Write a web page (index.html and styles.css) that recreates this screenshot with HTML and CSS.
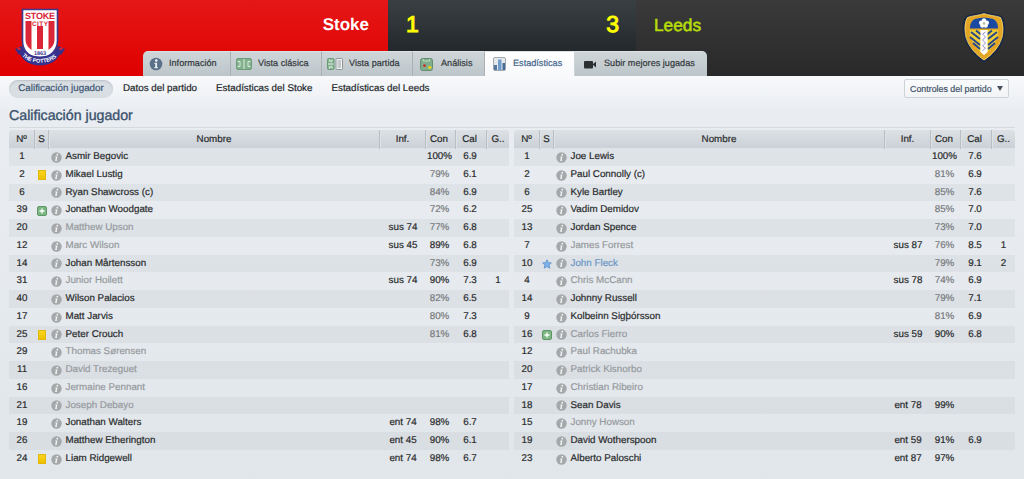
FILE: index.html
```html
<!DOCTYPE html>
<html lang="es">
<head>
  <meta charset="UTF-8" />
  <title>Stoke 1 - 3 Leeds</title>
  <link rel="stylesheet" href="styles.css">
</head>
<body>
  <header class="match-header">
    <div class="team home">
      <svg class="badge-home" width="52" height="60" viewBox="0 0 52 60">
        <path d="M1 41l7-3 3 5-6 4zM51 41l-7-3-3 5 6 4z" fill="#392f88"/>
        <path d="M3.500 40l3 1.500M48.500 40l-3 1.500" stroke="#d92437" stroke-width="2"/>
        <path d="M8.500 1.500h35v31c0 11-7 16-17.500 19C15.500 49 8.500 44 8.500 33z" fill="#fff" stroke="#3b3990" stroke-width="1.600"/>
        <path d="M11.500 13h6v29c-4-3-6-6-6-11zM23 18h6v23h-6zM34.500 13h6v18c0 5-2 8-6 11z" fill="#db2638"/>
        <text x="26" y="11" class="crest-name" textLength="30">STOKE</text>
        <text x="26" y="17.500" class="crest-city" textLength="16">CITY</text>
        <text x="26" y="46.500" class="crest-year">1863</text>
        <path d="M5 43l5-1c5 8.500 27 8.500 32 0l5 1c-3 11-13 14.500-21 14.500S8 54 5 43z" fill="#35318d"/>
        <path id="ribbon" d="M8 47.500c7 9.500 29 9.500 36 0" fill="none"/>
        <text class="crest-ribbon"><textPath href="#ribbon" textLength="38">THE POTTERS</textPath></text>
      </svg>
      <span class="team-name">Stoke</span>
    </div>
    <div class="score"><span>1</span><span>3</span></div>
    <div class="team away">
      <span class="team-name">Leeds</span>
      <svg class="badge-away" width="44" height="52" viewBox="0 0 44 52">
        <path d="M22 1.500c4 2 12 2 17 4 2.500 4 4 12 2 21-3 11-11 19-19 24C14 45 6 37 3 26 1 17 2 9 5 5.500c5-2 13-2 17-4z" fill="#e3a526" stroke="#14264a" stroke-width="1.800"/>
        <path d="M22 2.500c4 2 12 2 16.500 4 2 4 3.500 12 1.500 20-3 10-10 17-18 22.500C14 43.500 7 36.500 4 26.500 2 18 3.500 10 5.500 6.500 10 4.500 18 4.500 22 2.500z" fill="none" stroke="#f7df7d" stroke-width=".7"/>
        <path d="M8 17.500c0-5 2-8.500 5-9.500 6-2 12-2 18 0 3 1 5 4.500 5 9.500z" fill="#1b49a1"/>
        <path d="M8 19h28c1 9-5 18-14 25C13 37 7 28 8 19z" fill="#efcf36"/>
        <path d="M9 21l9 7M8 26l10 8M11 32l7 6M14 19.500l5 4M35 21l-9 7M36 26l-10 8M33 32l-7 6M30 19.500l-5 4" stroke="#28478c" stroke-width="2"/>
        <path d="M18.500 19h7v22l-3.500 3-3.500-3z" fill="#fff"/>
        <path d="M23.500 21l-3 2 3 3-3 3 3 3-3 3 3 2-3 3" fill="none" stroke="#9a8fc6" stroke-width="1"/>
        <g fill="#fff"><circle cx="22" cy="9.500" r="2.200"/><circle cx="24.800" cy="11.700" r="2.200"/><circle cx="23.700" cy="14.600" r="2.200"/><circle cx="20.300" cy="14.600" r="2.200"/><circle cx="19.200" cy="11.700" r="2.200"/></g>
        <circle cx="22" cy="12.500" r="1.200" fill="#b9c0a0"/>
      </svg>
    </div>
    <nav class="tabs">
      <a class="tab t-info">
        <svg width="14" height="14" viewBox="0 0 14 14"><circle cx="7" cy="7" r="6.300" fill="#5a7189"/><circle cx="7.300" cy="3.500" r="1.200" fill="#fff"/><path d="M5.300 5.700h2.800v4.500h.9v1.100H5.200v-1.100h1V6.700h-.9z" fill="#e9eef2"/></svg>
        <span>Información</span>
      </a>
      <a class="tab t-classic">
        <svg width="16" height="12" viewBox="0 0 16 12"><rect x=".5" y=".5" width="15" height="11" rx="1.500" fill="#82b18d" stroke="#6d9a79"/><path d="M8 1v10M1.500 3.500H4v5H1.500M14.500 3.500H12v5h2.500" stroke="#dcebdc" fill="none"/></svg>
        <span>Vista clásica</span>
      </a>
      <a class="tab t-match">
        <svg width="16" height="12" viewBox="0 0 16 12"><rect x=".5" y=".5" width="6.500" height="11" rx="1" fill="#82b18d" stroke="#6d9a79"/><path d="M1 6h5.500M2.500 1.500v1.700h2.500V1.500M2.500 10.500V8.800h2.500v1.700" stroke="#e3f0e3" fill="none"/><rect x="9" y=".5" width="6.500" height="11" rx="1" fill="#f2f4f4" stroke="#8d9496"/><path d="M10.500 3h3.500M10.500 5h3.500M10.500 7h3.500M10.500 9h3.500" stroke="#8b9296" stroke-width=".9"/></svg>
        <span>Vista partida</span>
      </a>
      <a class="tab t-analysis">
        <svg width="13" height="13" viewBox="0 0 13 13"><rect x=".5" y=".5" width="12" height="12" rx="2" fill="#80ad8b" stroke="#648d70"/><path d="M3.500 1v2h6V1" stroke="#c3dac6" fill="none"/><circle cx="4.500" cy="7.700" r="1.400" fill="#c4302b"/><circle cx="9.800" cy="9.300" r="1.600" fill="#f2d516"/></svg>
        <span>Análisis</span>
      </a>
      <a class="tab t-stats active">
        <svg width="13" height="14" viewBox="0 0 13 14"><rect x=".5" y=".5" width="12" height="13" rx="1.500" fill="#e5e9ec" stroke="#a0a7ae"/><path d="M1 8h3v5H1z" fill="#56789d"/><path d="M5 2.500h3.500V13H5z" fill="#6f9dcc"/><path d="M9.500 6h2.500v7H9.500z" fill="#476d97"/></svg>
        <span>Estadísticas</span>
      </a>
      <a class="tab t-upload">
        <svg width="13" height="9" viewBox="0 0 13 9"><rect y="1" width="9" height="7.500" rx="1" fill="#2b2f32"/><path d="M8.500 4.500L12 1.500v6z" fill="#2b2f32"/></svg>
        <span>Subir mejores jugadas</span>
      </a>
    </nav>
  </header>

  <div class="subnav">
    <a class="selected">Calificación jugador</a>
    <a>Datos del partido</a>
    <a>Estadísticas del Stoke</a>
    <a>Estadísticas del Leeds</a>
    <button class="controls">Controles del partido <i class="arrow"></i></button>
  </div>

  <h1>Calificación jugador</h1>

  <main class="ratings">
    <section class="squad" id="stoke"></section>
    <section class="squad" id="leeds"></section>
  </main>

  <script src="players.js"></script>
</body>
</html>
```
FILE: styles.css
```css
* {
  box-sizing: border-box;
}
body {
  margin: 0;
  height: 479px;
  overflow: hidden;
  font-family: "Liberation Sans", Arial, sans-serif;
  font-size: 9.8px;
  text-rendering: geometricPrecision;
  -webkit-text-stroke: 0.2px;
  color: #292b2c;
  background: linear-gradient(#f8f9fb 76px, #e9edf1 112px, #e7ebef 250px, #e1e6ea 100%);
}
.match-header {
  position: relative;
  display: grid;
  grid-template-columns: 388px 248px 1fr;
  height: 76px;
}
.team {
  display: flex;
  align-items: flex-start;
  justify-content: space-between;
}
.team-name {
  font-size: 17.3px;
  line-height: 20px;
  margin-top: 15px;
}
.home {
  padding: 8px 19px 0 14px;
  background: linear-gradient(#e61717, #df0000);
  color: #fff;
}
.home .team-name {
  font-weight: bold;
  font-size: 17px;
  margin-top: 7px;
  -webkit-text-stroke: 0;
}
.away {
  padding: 0 18px;
  background: linear-gradient(#3a3a3a, #292929);
  color: #b5dc09;
}
.away .team-name {
  -webkit-text-stroke: 0.6px #b5dc09;
}
.badge-home {
  -webkit-text-stroke: 0;
}
.badge-away {
  margin-top: 11px;
}
.crest-name, .crest-city, .crest-year, .crest-ribbon {
  font-weight: bold;
  text-anchor: middle;
}
.crest-name {
  font-size: 9px;
  fill: #d92437;
}
.crest-city {
  font-size: 6.5px;
  fill: #d92437;
}
.crest-year {
  font-size: 5.5px;
  fill: #35318d;
}
.crest-ribbon {
  font-size: 5.5px;
  text-anchor: start;
  fill: #fff;
}
.score {
  display: flex;
  justify-content: space-between;
  padding: 11px 17px 0 18px;
  background: linear-gradient(#394044, #181c1f);
  color: #ff0;
  font-size: 23px;
  line-height: 26px;
  -webkit-text-stroke: 1px #ff0;
}

/* tabs sit over the bottom edge of the three header panels */
.tabs {
  position: absolute;
  left: 143px;
  bottom: 0;
  display: flex;
  height: 25px;
  border-radius: 5px 5px 0 0;
  overflow: hidden;
}
.tab {
  display: flex;
  align-items: center;
  padding-left: 6px;
  font-size: 9.15px;
  color: #34393d;
  border-right: 1px solid #a9b1b5;
  border-top: 1px solid #dce1e4;
  background: linear-gradient(#cfd6da, #bcc5c9);
}
.tab svg {
  flex: none;
}
.tab span {
  margin-top: -3px;
  white-space: nowrap;
}
.t-info { width: 88px; }
.t-info span { margin-left: 6px; }
.t-classic { width: 91px; padding-left: 5px; }
.t-classic span { margin-left: 6px; }
.t-match { width: 91px; padding-left: 5px; }
.t-match span { margin-left: 6px; }
.t-analysis { width: 72px; padding-left: 7px; }
.t-analysis span { margin-left: 8px; }
.t-stats { width: 90px; padding-left: 8px; }
.t-stats span { margin-left: 7px; }
.t-upload { width: 132px; padding-left: 9px; border-right: 0; }
.t-upload span { margin-left: 7px; }
.tab.active {
  background: linear-gradient(#fff, #f8f9fb);
  color: #42658c;
  border-right-color: #ccd2d6;
}

.subnav {
  display: flex;
  align-items: center;
  height: 25px;
  padding: 0 15px 0 9px;
  font-size: 9.8px;
  color: #24282b;
}
.subnav a {
  margin-right: 19px;
}
.subnav .selected {
  width: 104px;
  height: 18px;
  margin-right: 10px;
  line-height: 17px;
  text-align: center;
  border-radius: 9px;
  background: #d9dee3;
  box-shadow: inset 0 1px 2px #b9c0c6;
  color: #3c5573;
}
.controls {
  display: flex;
  align-items: center;
  justify-content: space-between;
  width: 105px;
  height: 19px;
  margin-left: auto;
  padding: 0 5px;
  border: 1px solid #ced3d8;
  border-radius: 2px;
  background: linear-gradient(#fafbfc, #f1f3f5);
  font: 8.85px "Liberation Sans", Arial, sans-serif;
  white-space: nowrap;
  color: #3f526a;
}
.arrow {
  border: 3.5px solid transparent;
  border-top: 5px solid #46515b;
  border-bottom: 0;
}
h1 {
  height: 27px;
  margin: 0 9px;
  border-bottom: 1px solid #d5dadd;
  font-size: 14.2px;
  font-weight: normal;
  line-height: 31px;
  color: #3b526d;
  -webkit-text-stroke: 0.35px #3b526d;
}
.ratings {
  display: grid;
  grid-template-columns: 500px 501px;
  gap: 5px;
  padding: 2px 9px 0;
}
.row {
  display: grid;
  grid-template-columns: 26px 14px 1fr 46px 30px 31px 22px;
  height: 17.76px;
  line-height: 18.5px;
  text-align: center;
}
#leeds .row {
  grid-template-columns: 26px 14px 1fr 46px 30px 31px 23px;
}
.row:nth-child(even) {
  background: rgba(120, 130, 138, 0.08);
}
.row.head {
  height: 18px;
  line-height: 19px;
  border-radius: 3px 3px 0 0;
  background: linear-gradient(#dde1e5, #cbd1d7);
}
.head span {
  border-right: 1px solid #b8bec4;
  box-shadow: 1px 0 #dde2e5;
}
.head span:last-child {
  border: 0;
  box-shadow: none;
}
.row .con, .row .cal {
  padding-right: 3px;
}
.row .con {
  white-space: nowrap;
}
.row .name {
  display: flex;
  align-items: center;
  padding-left: 1.5px;
  text-align: left;
}
.name svg {
  margin-right: 4px;
}
.mark {
  display: flex;
  align-items: center;
  justify-content: center;
}
.mark svg {
  flex: none;
}
.card {
  width: 8px;
  height: 10px;
  background: linear-gradient(#fad51e, #eec000);
  border: 1px solid #e2b70b;
}
.unused .name {
  color: #969a9e;
}
.best .name {
  color: #6c97c5;
}
.tired {
  color: #777a7d;
}
```
FILE: players.js
```js
// number, mark, name, name style, info, condition, rating, goals
const stoke = [
  [1, "", "Asmir Begovic", "", "", 100, "6.9", ""],
  [2, "card", "Mikael Lustig", "", "", 79, "6.1", ""],
  [6, "", "Ryan Shawcross (c)", "", "", 84, "6.9", ""],
  [39, "plus", "Jonathan Woodgate", "", "", 72, "6.2", ""],
  [20, "", "Matthew Upson", "unused", "sus 74", 77, "6.8", ""],
  [12, "", "Marc Wilson", "unused", "sus 45", 89, "6.8", ""],
  [14, "", "Johan Mårtensson", "", "", 73, "6.9", ""],
  [31, "", "Junior Hoilett", "unused", "sus 74", 90, "7.3", "1"],
  [40, "", "Wilson Palacios", "", "", 82, "6.5", ""],
  [17, "", "Matt Jarvis", "", "", 80, "7.3", ""],
  [25, "card", "Peter Crouch", "", "", 81, "6.8", ""],
  [29, "", "Thomas Sørensen", "unused", "", "", "", ""],
  [11, "", "David Trezeguet", "unused", "", "", "", ""],
  [16, "", "Jermaine Pennant", "unused", "", "", "", ""],
  [21, "", "Joseph Debayo", "unused", "", "", "", ""],
  [19, "", "Jonathan Walters", "", "ent 74", 98, "6.7", ""],
  [26, "", "Matthew Etherington", "", "ent 45", 90, "6.1", ""],
  [24, "card", "Liam Ridgewell", "", "ent 74", 98, "6.7", ""]
];

const leeds = [
  [1, "", "Joe Lewis", "", "", 100, "7.6", ""],
  [2, "", "Paul Connolly (c)", "", "", 81, "6.9", ""],
  [6, "", "Kyle Bartley", "", "", 85, "7.6", ""],
  [25, "", "Vadim Demidov", "", "", 85, "7.0", ""],
  [13, "", "Jordan Spence", "", "", 73, "7.0", ""],
  [7, "", "James Forrest", "unused", "sus 87", 76, "8.5", "1"],
  [10, "star", "John Fleck", "best", "", 79, "9.1", "2"],
  [4, "", "Chris McCann", "unused", "sus 78", 74, "6.9", ""],
  [14, "", "Johnny Russell", "", "", 79, "7.1", ""],
  [9, "", "Kolbeinn Sigþórsson", "", "", 81, "6.9", ""],
  [16, "plus", "Carlos Fierro", "unused", "sus 59", 90, "6.8", ""],
  [12, "", "Paul Rachubka", "unused", "", "", "", ""],
  [20, "", "Patrick Kisnorbo", "unused", "", "", "", ""],
  [17, "", "Christian Ribeiro", "unused", "", "", "", ""],
  [18, "", "Sean Davis", "", "ent 78", 99, "", ""],
  [15, "", "Jonny Howson", "unused", "", "", "", ""],
  [19, "", "David Wotherspoon", "", "ent 59", 91, "6.9", ""],
  [23, "", "Alberto Paloschi", "", "ent 87", 97, "", ""]
];

const marks = {
  "": "",
  card: '<i class="card"></i>',
  plus: '<svg width="10" height="10" viewBox="0 0 10 10"><rect x=".5" y=".5" width="9" height="9" rx="1.500" fill="#7db884" stroke="#5e9668"/><path d="M5 2.500v5M2.500 5h5" stroke="#fff" stroke-width="1.300"/></svg>',
  star: '<svg width="10" height="10" viewBox="0 0 10 10"><path d="M5 .7l1.300 2.900 3.100.3-2.300 2.100.7 3.200L5 7.600 2.200 9.200l.7-3.200L.6 3.900l3.100-.3z" fill="#7eb2ea" stroke="#5689c6" stroke-width=".7"/></svg>'
};

const infoIcon = '<svg width="11" height="11" viewBox="0 0 11 11"><circle cx="5.500" cy="5.500" r="5.200" fill="#a5a8aa"/><circle cx="6.300" cy="2.700" r=".9" fill="#f3f4f5"/><path d="M4.300 4.500h2.200l-.9 3.900h.7l-.2.700H4.100l.8-3.900h-.8z" fill="#f3f4f5"/></svg>';

function render(id, players) {
  let html = '<div class="row head"><span>Nº</span><span>S</span><span>Nombre</span><span>Inf.</span><span class="con">Con</span><span class="cal">Cal</span><span>G..</span></div>';
  players.forEach(([num, mark, name, style, inf, con, cal, goals]) => {
    const tired = con && con < 89 ? "tired" : "";
    html += `
      <div class="row ${style}">
        <span>${num}</span>
        <span class="mark">${marks[mark]}</span>
        <span class="name">${infoIcon}${name}</span>
        <span>${inf}</span>
        <span class="con ${tired}">${con ? con + "%" : ""}</span>
        <span class="cal">${cal}</span>
        <span>${goals}</span>
      </div>`;
  });
  document.getElementById(id).innerHTML = html;
}

render("stoke", stoke);
render("leeds", leeds);
```
